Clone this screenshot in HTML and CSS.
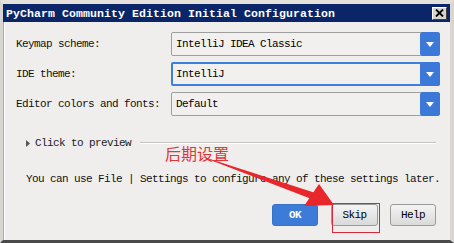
FILE: index.html
```html
<!DOCTYPE html>
<html>
<head>
<meta charset="utf-8">
<link rel="stylesheet" href="styles.css">
</head>
<body>
<div class="window">
  <div class="titlebar">
    <span class="title">PyCharm Community Edition Initial Configuration</span>
    <span class="close">
      <svg width="9" height="8" viewBox="0 0 9 8"><path d="M1 0.5 L8 7.5 M8 0.5 L1 7.5" stroke="#000" stroke-width="1.8"/></svg>
    </span>
  </div>
  <div class="content">
    <div class="form">
      <label class="lbl">Keymap scheme:</label>
      <div class="combo"><span class="val">IntelliJ IDEA Classic</span><span class="drop"><svg width="8" height="5" viewBox="0 0 8 5"><path d="M0 0 H8 L4 5 Z" fill="#fff"/></svg></span></div>
      <label class="lbl">IDE theme:</label>
      <div class="combo focus"><span class="val">IntelliJ</span><span class="drop"><svg width="8" height="5" viewBox="0 0 8 5"><path d="M0 0 H8 L4 5 Z" fill="#fff"/></svg></span></div>
      <label class="lbl">Editor colors and fonts:</label>
      <div class="combo"><span class="val">Default</span><span class="drop"><svg width="8" height="5" viewBox="0 0 8 5"><path d="M0 0 H8 L4 5 Z" fill="#fff"/></svg></span></div>
    </div>
    <div class="preview">
      <svg class="tri" width="4" height="7" viewBox="0 0 4 7"><path d="M0 0 L4 3.5 L0 7 Z" fill="#555"/></svg>
      <span class="ptext">Click to preview</span>
      <span class="rule"></span>
    </div>
    <p class="hint">You can use File | Settings to configure any of these settings later.</p>
    <div class="buttons">
      <button class="btn ok">OK</button>
      <button class="btn skip">Skip</button>
      <button class="btn">Help</button>
    </div>
  </div>
  <div class="note">后期设置</div>
  <svg class="arrow" width="454" height="243" viewBox="0 0 454 243">
    <path d="M196 154.5 L314 192.5 L311.5 199 Z" fill="#e8262b"/>
    <path d="M334 205 L304 206 L319 184 Z" fill="#e8262b"/>
  </svg>
  <div class="mark"></div>
</div>
</body>
</html>
```
FILE: styles.css
```css
* { box-sizing: border-box; }
html, body { margin: 0; padding: 0; }
body {
  width: 454px;
  height: 243px;
  background: #d8d4d0;
  font-family: "Liberation Mono", "DejaVu Sans Mono", monospace;
}
.window {
  position: relative;
  width: 454px;
  height: 243px;
  background: #f0eded;
  border-top: 4px solid #e4e1dd;
  border-left: 3px solid #d9d6d2;
  border-right: 4px solid #d9d6d2;
  border-bottom: 3px solid #4a4a4a;
  box-shadow: inset 1px 0 0 #a9a9a9, inset 2px 0 0 #fff;
  display: flex;
  flex-direction: column;
}
.titlebar {
  height: 18px;
  background: #0b2668;
  display: flex;
  align-items: center;
  justify-content: space-between;
  padding: 0 3px 0 3px;
  flex-shrink: 0;
}
.title {
  color: #fff;
  font-weight: bold;
  font-size: 11.5px;
  letter-spacing: 0.1px;
}
.close {
  width: 15px;
  height: 13px;
  background: #d8d4cc;
  border: 1px solid;
  border-color: #fff #404040 #404040 #fff;
  display: flex;
  align-items: center;
  justify-content: center;
}
.content {
  flex: 1;
  padding: 10px 14px 0 13px;
  display: flex;
  flex-direction: column;
  font-size: 11px;
  letter-spacing: -0.6px;
  color: #000;
}
.form {
  display: grid;
  grid-template-columns: 155px 269px;
  grid-auto-rows: 24px;
  row-gap: 6px;
  align-items: center;
}
.lbl { color: #111; }
.combo {
  height: 24px;
  border: 1px solid #9e9e9e;
  border-radius: 2px;
  background: #f2efef;
  display: flex;
  align-items: center;
  justify-content: space-between;
  padding-left: 4px;
}
.combo.focus {
  border: 2px solid #3d7fdc;
  padding-left: 3px;
}
.drop {
  width: 20px;
  height: 24px;
  margin-right: -1px;
  background: #3b78d8;
  border-radius: 3px;
  display: flex;
  align-items: center;
  justify-content: center;
}
.combo.focus .drop { margin-right: -2px; }
.preview {
  margin-top: 20px;
  padding-left: 10px;
  display: flex;
  align-items: center;
  height: 14px;
}
.tri { margin-right: 5px; }
.ptext { color: #222; }
.rule {
  flex: 1;
  height: 2px;
  margin-left: 9px;
  border-top: 1px solid #c8c4c4;
  border-bottom: 1px solid #fff;
}
.hint {
  margin: 23px 0 0 10px;
  color: #111;
  white-space: nowrap;
}
.buttons {
  margin-top: 19px;
  display: flex;
  justify-content: flex-end;
  gap: 12px;
}
.btn {
  width: 46px;
  height: 22px;
  font-family: "Liberation Mono", monospace;
  font-size: 11px;
  letter-spacing: -0.6px;
  border: 1px solid #9a9a9a;
  border-radius: 3px;
  background: linear-gradient(#f4f4f4, #d9d9d9);
  color: #000;
  padding: 0;
}
.btn.skip { width: 47px; }
.btn.ok {
  background: #3d7bd9;
  border-color: #3a72c8;
  color: #fff;
  font-weight: bold;
  margin-right: 1px;
}
.note {
  position: absolute;
  left: 162px;
  top: 139px;
  color: #e4343a;
  font-family: "Noto Sans CJK SC", sans-serif;
  font-size: 16px;
  line-height: 20px;
  letter-spacing: 0;
}
.arrow {
  position: absolute;
  left: -3px;
  top: -4px;
}
.mark {
  position: absolute;
  left: 329px;
  top: 199px;
  width: 48px;
  height: 30px;
  border: 1px solid #d8283a;
}
```
